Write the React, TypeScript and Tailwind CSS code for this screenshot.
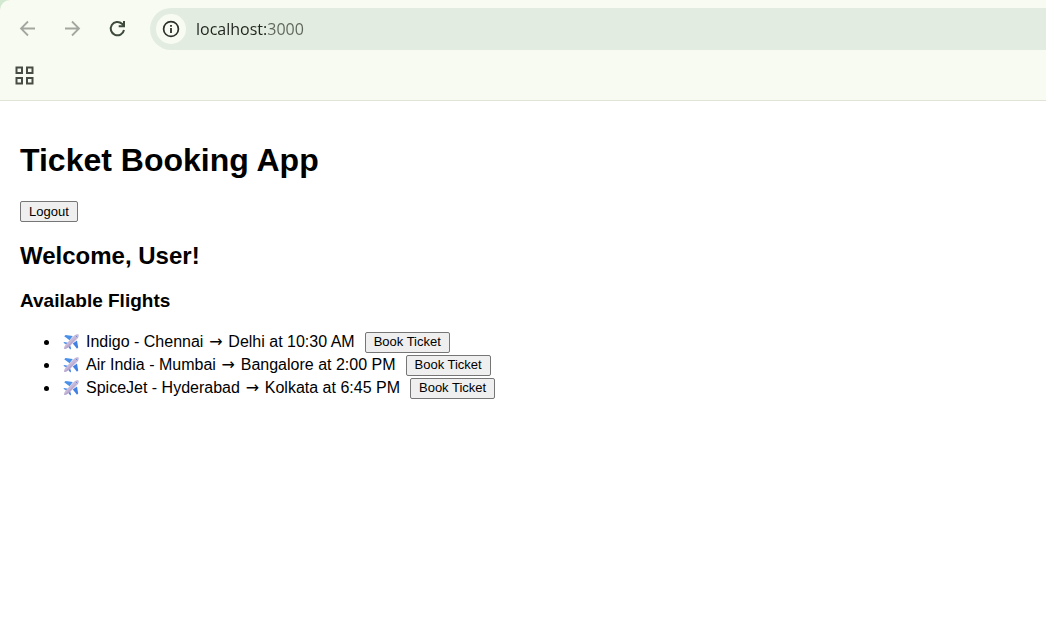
import React from "react";

const flights = [
  { id: 1, airline: "Indigo", from: "Chennai", to: "Delhi", time: "10:30 AM" },
  { id: 2, airline: "Air India", from: "Mumbai", to: "Bangalore", time: "2:00 PM" },
  { id: 3, airline: "SpiceJet", from: "Hyderabad", to: "Kolkata", time: "6:45 PM" },
];

function PlaneIcon() {
  return (
    <svg viewBox="0 0 16 16" className="mr-[7px] ml-px inline-block h-4 w-4 align-[-3px]" aria-hidden="true">
      <path d="M1.2 2.2 2.6 1 9.8 1.9 6.6 6.2z" fill="#4a90e8" />
      <path d="M14 6.4 15.2 13.4 14 14.8 9.8 9.4z" fill="#4080e4" />
      <path d="M.4 8.8 1.4 8 4.8 8.8 3.6 10.8z" fill="#4a90e8" />
      <path d="M7.2 11.4 8 14.6 7.2 15.6 5.2 12.6z" fill="#4080e4" />
      <path d="M1.2 14.8C.3 13.9 2.2 10.9 3.8 9.2L10.8 2.1C12.4.5 14.8-.1 15.5.6S15.4 3.7 13.8 5.3L6.7 12.3C5 13.9 2.1 15.7 1.2 14.8z" fill="#c6b9d9" />
      <path d="M6.7 12.3C5 13.9 2.1 15.7 1.2 14.8L13.8 3z" fill="#ab96c8" opacity=".55" />
      <path d="M12.9 1.8 14.3 3.2" stroke="#6b87cc" strokeWidth="1" />
    </svg>
  );
}

function PlainButton({ children }: { children: React.ReactNode }) {
  return (
    <button
      type="button"
      className="h-[21px] rounded-[2px] border border-[#767676] bg-[#efefef] px-2 align-[1px] text-[13px] leading-4 text-black"
    >
      {children}
    </button>
  );
}

function BrowserBar() {
  return (
    <header className="border-b border-[#dfe4d7] bg-[#d3e8d0]">
      <div className="rounded-tl-[10px] bg-[#f8fbf1]">
        <div className="flex items-center pt-2">
          <nav className="flex w-[150px] shrink-0 items-center gap-[21px] pl-4" aria-label="Browser navigation">
            <button type="button" aria-label="Back" className="h-6 w-6">
              <svg viewBox="0 0 24 24" fill="none" stroke="#a3a7a0" strokeWidth="1.8">
                <path d="M19 11.5H5M12 4.5 5 11.5l7 7" />
              </svg>
            </button>
            <button type="button" aria-label="Forward" className="h-6 w-6">
              <svg viewBox="0 0 24 24" fill="none" stroke="#a3a7a0" strokeWidth="1.8">
                <path d="M4 11.5h14M11 4.5l7 7-7 7" />
              </svg>
            </button>
            <button type="button" aria-label="Reload" className="h-6 w-6">
              <svg viewBox="0 0 24 24" fill="none" stroke="#3e4a3c" strokeWidth="2">
                <path d="M18 13a6.7 6.7 0 1 1-2-6.3L18 8.8" />
                <path d="M18 4v5.2h-5.3" />
              </svg>
            </button>
          </nav>
          <div className="flex h-[42px] min-w-0 flex-1 items-center rounded-l-full bg-[#e3ece0] pl-[6px]">
            <button
              type="button"
              aria-label="View site information"
              className="flex h-[30px] w-[30px] shrink-0 items-center justify-center rounded-full bg-[#f8fbf1]"
            >
              <svg viewBox="0 0 18 18" className="h-[18px] w-[18px]" fill="none" stroke="#2b302a">
                <circle cx="9" cy="9" r="7.4" strokeWidth="1.7" />
                <path d="M9 8v5M9 5v1.8" strokeWidth="1.8" />
              </svg>
            </button>
            <input
              aria-label="Address"
              defaultValue="localhost:3000"
              className="ml-[10px] h-8 min-w-0 flex-1 bg-linear-to-r from-[#1f241e] from-[70px] to-[#5d645a] to-[70px] bg-clip-text font-['Open_Sans',sans-serif] text-[16px] text-transparent caret-black outline-none"
            />
          </div>
        </div>
        <div className="flex h-[50px] items-center pl-[15px]">
          <button type="button" aria-label="Apps" className="h-[19px] w-[19px]">
            <svg viewBox="0 0 19 19" fill="none" stroke="#474d44" strokeWidth="2">
              <path d="M1.5 1.5h5.5v5.5H1.5zM12 1.5h5.5v5.5H12zM1.5 12h5.5v5.5H1.5zM12 12h5.5v5.5H12z" />
            </svg>
          </button>
        </div>
      </div>
    </header>
  );
}

export default function App() {
  return (
    <div className="min-h-screen bg-white font-['Liberation_Sans',Arial,sans-serif] text-black">
      <BrowserBar />
      <main className="px-5 pt-[41px]">
        <h1 className="text-[32px] leading-9 font-bold">Ticket Booking App</h1>
        <div className="mt-[23px] flex">
          <PlainButton>Logout</PlainButton>
        </div>
        <h2 className="mt-5 text-2xl leading-7 font-bold">Welcome, User!</h2>
        <h3 className="mt-5 text-[19px] leading-[22px] font-bold">Available Flights</h3>
        <ul className="mt-[18px] list-disc pl-10">
          {flights.map((flight) => (
            <li key={flight.id} className="h-[23px] pl-[2px] text-base leading-[23px]">
              <PlaneIcon />
              <span className="mr-[10px]">
                {flight.airline} - {flight.from}{" "}
                <span className="inline-block w-4 text-center font-['DejaVu_Sans',sans-serif] leading-4">→</span>{" "}
                {flight.to} at {flight.time}
              </span>
              <PlainButton>Book Ticket</PlainButton>
            </li>
          ))}
        </ul>
      </main>
    </div>
  );
}
